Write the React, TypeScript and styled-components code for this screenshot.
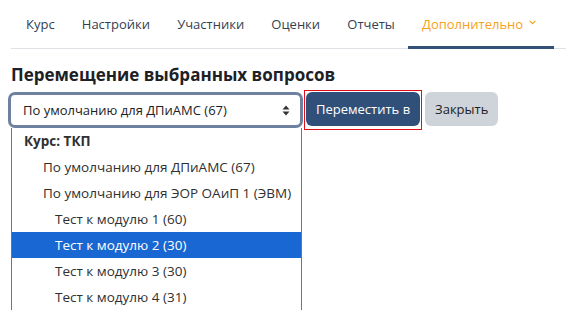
import styled, { createGlobalStyle } from "styled-components";

const GlobalStyle = createGlobalStyle`
  body {
    margin: 0;
    background: #ffffff;
    font-family: "Open Sans", "Noto Sans", sans-serif;
    color: #1d2125;
  }
`;

const Page = styled.div`
  width: 566px;
  height: 317px;
  overflow: hidden;
  padding: 0 11px;
  box-sizing: border-box;
`;

const Nav = styled.nav`
  display: flex;
  height: 48px;
  border-bottom: 1px solid #dee2e6;
  margin-right: -11px;
`;

const NavItem = styled.div<{ $active?: boolean }>`
  display: flex;
  align-items: center;
  padding: 2px 13.6px 0;
  font-size: 13px;
  color: ${p => (p.$active ? "#f7a21b" : "#343f52")};
  border-bottom: 3px solid ${p => (p.$active ? "#34517a" : "transparent")};
  margin-bottom: -1px;
  white-space: nowrap;
  &:first-child {
    padding-left: 15px;
  }
`;

const Chevron = styled.svg`
  margin-left: 6px;
  margin-right: 4px;
  margin-top: -3px;
`;

const Title = styled.h2`
  margin: 16px 0 5px;
  font-size: 17px;
  font-weight: 700;
  color: #1d2125;
  line-height: 20px;
`;

const Row = styled.div`
  display: flex;
  align-items: center;
`;

const SelectWrap = styled.div`
  position: relative;
  width: 295px;
  margin-left: -3px;
`;

const SelectBox = styled.div`
  height: 36px;
  box-sizing: border-box;
  border: 3px solid #6e82a0;
  border-radius: 7px;
  display: flex;
  align-items: center;
  justify-content: space-between;
  padding: 0 10px 0 12px;
  font-size: 13px;
  color: #1d2125;
  background: #fff;
`;

const Options = styled.div`
  position: absolute;
  top: 36px;
  left: 3px;
  width: 291px;
  box-sizing: border-box;
  border-left: 1px solid #767676;
  border-right: 1px solid #767676;
  background: #fff;
`;

const Option = styled.div<{ $indent: number; $selected?: boolean; $group?: boolean }>`
  height: 26px;
  display: flex;
  align-items: center;
  padding-left: ${p => p.$indent}px;
  font-size: 13.5px;
  font-weight: ${p => (p.$group ? 700 : 400)};
  background: ${p => (p.$selected ? "#1967d2" : "transparent")};
  color: ${p => (p.$selected ? "#ffffff" : "#303030")};
  white-space: nowrap;
`;

const MoveFrame = styled.div`
  margin-left: 1px;
  border: 1px solid #e0101a;
  padding: 1px 1px 3px;
  display: flex;
`;

const Button = styled.button<{ $primary?: boolean }>`
  height: 34px;
  border: none;
  border-radius: 6px;
  padding: 0 10px;
  font-family: inherit;
  font-size: 13px;
  background: ${p => (p.$primary ? "#30507a" : "#ced4da")};
  color: ${p => (p.$primary ? "#ffffff" : "#1d2125")};
`;

const CloseButton = styled(Button)`
  margin-left: 3px;
  margin-bottom: 2px;
`;

const navItems = ["Курс", "Настройки", "Участники", "Оценки", "Отчеты"];

const options = [
  { label: "Курс: ТКП", indent: 12, group: true },
  { label: "По умолчанию для ДПиАМС (67)", indent: 31 },
  { label: "По умолчанию для ЭОР ОАиП 1 (ЭВМ)", indent: 31 },
  { label: "Тест к модулю 1 (60)", indent: 43 },
  { label: "Тест к модулю 2 (30)", indent: 43, selected: true },
  { label: "Тест к модулю 3 (30)", indent: 43 },
  { label: "Тест к модулю 4 (31)", indent: 43 },
];

const App = () => {
  return (
    <>
      <GlobalStyle />
      <Page>
        <Nav>
          {navItems.map(item => (
            <NavItem key={item}>{item}</NavItem>
          ))}
          <NavItem $active>
            Дополнительно
            <Chevron width="7" height="5" viewBox="0 0 7 5">
              <path d="M0.6 0.8 L3.5 3.7 L6.4 0.8" fill="none" stroke="#f7a21b" strokeWidth="1.2" />
            </Chevron>
          </NavItem>
        </Nav>
        <Title>Перемещение выбранных вопросов</Title>
        <Row>
          <SelectWrap>
            <SelectBox>
              <span>По умолчанию для ДПиАМС (67)</span>
              <svg width="8" height="11" viewBox="0 0 8 11">
                <path d="M4 0.5 L7.5 4.5 H0.5 Z M4 10.5 L0.5 6.5 H7.5 Z" fill="#333" />
              </svg>
            </SelectBox>
            <Options>
              {options.map(o => (
                <Option key={o.label} $indent={o.indent} $group={o.group} $selected={o.selected}>
                  {o.label}
                </Option>
              ))}
            </Options>
          </SelectWrap>
          <MoveFrame>
            <Button $primary>Переместить в</Button>
          </MoveFrame>
          <CloseButton>Закрыть</CloseButton>
        </Row>
      </Page>
    </>
  );
};

export default App;
